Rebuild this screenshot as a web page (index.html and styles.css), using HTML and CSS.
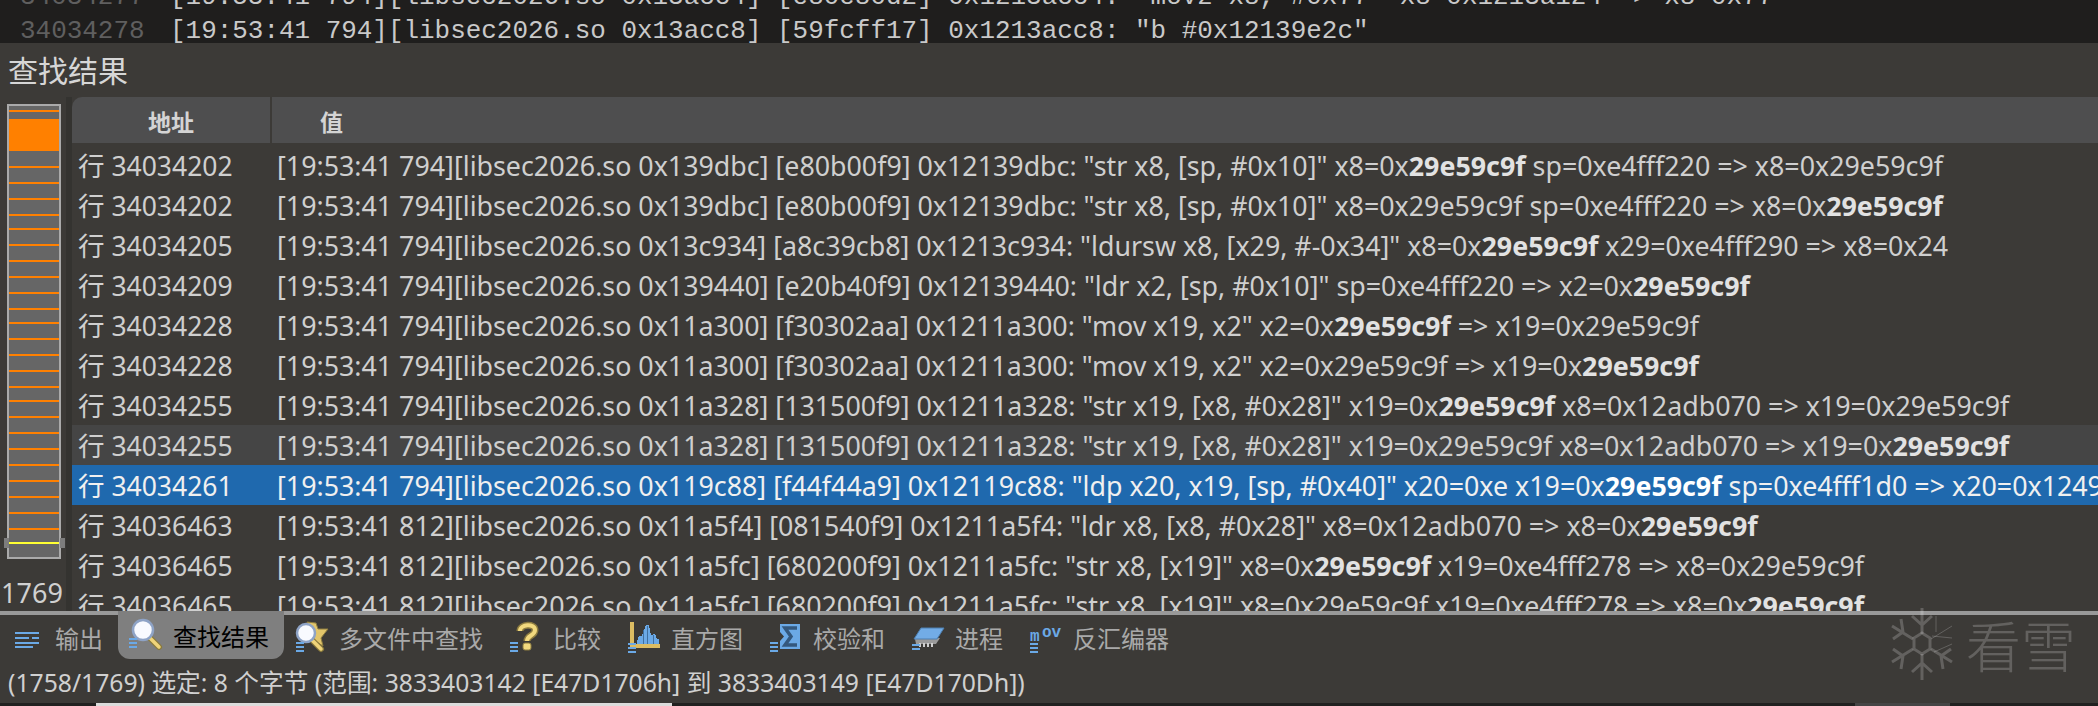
FILE: index.html
```html
<!DOCTYPE html>
<html lang="zh">
<head>
<meta charset="UTF-8">
<title>查找结果</title>
<link rel="stylesheet" href="styles.css">
</head>
<body>

<div class="log">
  <div class="log-line"><span class="log-num">34034277</span><span>[19:53:41 794][libsec2026.so 0x13acc4] [e80e80d2] 0x1213acc4: "movz x8, #0x77" x8=0x1213a124 => x8=0x77</span></div>
  <div class="log-line"><span class="log-num">34034278</span><span>[19:53:41 794][libsec2026.so 0x13acc8] [59fcff17] 0x1213acc8: "b #0x12139e2c"</span></div>
</div>

<div class="panel-title">查找结果</div>

<div class="results">
  <div class="side">
    <div class="map">
      <span class="grip grip-left"></span>
      <svg class="marks" width="50" height="451" shape-rendering="crispEdges">
        <g fill="#ff8000">
          <rect y="0" width="50" height="2"/>
          <rect y="9" width="50" height="32"/>
          <rect y="56" width="50" height="2"/>
          <rect y="72" width="50" height="2"/>
          <rect y="88" width="50" height="2"/>
          <rect y="104" width="50" height="2"/>
          <rect y="118" width="50" height="2"/>
          <rect y="134" width="50" height="2"/>
          <rect y="150" width="50" height="2"/>
          <rect y="166" width="50" height="2"/>
          <rect y="182" width="50" height="2"/>
          <rect y="198" width="50" height="2"/>
          <rect y="212" width="50" height="2"/>
          <rect y="228" width="50" height="2"/>
          <rect y="244" width="50" height="2"/>
          <rect y="260" width="50" height="2"/>
          <rect y="276" width="50" height="2"/>
          <rect y="290" width="50" height="2"/>
          <rect y="306" width="50" height="2"/>
          <rect y="322" width="50" height="2"/>
          <rect y="338" width="50" height="2"/>
          <rect y="354" width="50" height="2"/>
          <rect y="370" width="50" height="2"/>
          <rect y="386" width="50" height="2"/>
          <rect y="402" width="50" height="2"/>
          <rect y="418" width="50" height="2"/>
        </g>
        <rect y="432" width="50" height="2" fill="#ffff33"/>
      </svg>
      <span class="grip grip-right"></span>
    </div>
    <div class="map-count">1769</div>
  </div>

  <div class="table">
    <div class="table-head">
      <div class="head-addr">地址</div>
      <div class="head-val">值</div>
    </div>

    <div class="row"><div class="addr">行 34034202</div><div class="val">[19:53:41 794][libsec2026.so 0x139dbc] [e80b00f9] 0x12139dbc: "str x8, [sp, #0x10]" x8=0x<b>29e59c9f</b> sp=0xe4fff220 =&gt; x8=0x29e59c9f</div></div>
    <div class="row"><div class="addr">行 34034202</div><div class="val">[19:53:41 794][libsec2026.so 0x139dbc] [e80b00f9] 0x12139dbc: "str x8, [sp, #0x10]" x8=0x29e59c9f sp=0xe4fff220 =&gt; x8=0x<b>29e59c9f</b></div></div>
    <div class="row"><div class="addr">行 34034205</div><div class="val">[19:53:41 794][libsec2026.so 0x13c934] [a8c39cb8] 0x1213c934: "ldursw x8, [x29, #-0x34]" x8=0x<b>29e59c9f</b> x29=0xe4fff290 =&gt; x8=0x24</div></div>
    <div class="row"><div class="addr">行 34034209</div><div class="val">[19:53:41 794][libsec2026.so 0x139440] [e20b40f9] 0x12139440: "ldr x2, [sp, #0x10]" sp=0xe4fff220 =&gt; x2=0x<b>29e59c9f</b></div></div>
    <div class="row"><div class="addr">行 34034228</div><div class="val">[19:53:41 794][libsec2026.so 0x11a300] [f30302aa] 0x1211a300: "mov x19, x2" x2=0x<b>29e59c9f</b> =&gt; x19=0x29e59c9f</div></div>
    <div class="row"><div class="addr">行 34034228</div><div class="val">[19:53:41 794][libsec2026.so 0x11a300] [f30302aa] 0x1211a300: "mov x19, x2" x2=0x29e59c9f =&gt; x19=0x<b>29e59c9f</b></div></div>
    <div class="row"><div class="addr">行 34034255</div><div class="val">[19:53:41 794][libsec2026.so 0x11a328] [131500f9] 0x1211a328: "str x19, [x8, #0x28]" x19=0x<b>29e59c9f</b> x8=0x12adb070 =&gt; x19=0x29e59c9f</div></div>
    <div class="row row-hover"><div class="addr">行 34034255</div><div class="val">[19:53:41 794][libsec2026.so 0x11a328] [131500f9] 0x1211a328: "str x19, [x8, #0x28]" x19=0x29e59c9f x8=0x12adb070 =&gt; x19=0x<b>29e59c9f</b></div></div>
    <div class="row row-active"><div class="addr">行 34034261</div><div class="val">[19:53:41 794][libsec2026.so 0x119c88] [f44f44a9] 0x12119c88: "ldp x20, x19, [sp, #0x40]" x20=0xe x19=0x<b>29e59c9f</b> sp=0xe4fff1d0 =&gt; x20=0x124900b0</div></div>
    <div class="row"><div class="addr">行 34036463</div><div class="val">[19:53:41 812][libsec2026.so 0x11a5f4] [081540f9] 0x1211a5f4: "ldr x8, [x8, #0x28]" x8=0x12adb070 =&gt; x8=0x<b>29e59c9f</b></div></div>
    <div class="row"><div class="addr">行 34036465</div><div class="val">[19:53:41 812][libsec2026.so 0x11a5fc] [680200f9] 0x1211a5fc: "str x8, [x19]" x8=0x<b>29e59c9f</b> x19=0xe4fff278 =&gt; x8=0x29e59c9f</div></div>
    <div class="row"><div class="addr">行 34036465</div><div class="val">[19:53:41 812][libsec2026.so 0x11a5fc] [680200f9] 0x1211a5fc: "str x8, [x19]" x8=0x29e59c9f x19=0xe4fff278 =&gt; x8=0x<b>29e59c9f</b></div></div>
  </div>
</div>

<div class="divider"></div>

<div class="tabs">
  <div class="tab">
    <svg class="tab-icon" width="32" height="32" shape-rendering="crispEdges">
      <g fill="#6ba9e6">
        <rect x="3" y="10" width="24" height="2"/>
        <rect x="3" y="15" width="14" height="2"/>
        <rect x="20" y="15" width="7" height="2"/>
        <rect x="3" y="20" width="24" height="2"/>
        <rect x="3" y="24" width="18" height="2"/>
      </g>
    </svg>
    <span>输出</span>
  </div>
  <div class="tab tab-active">
    <svg class="tab-icon" width="32" height="32">
      <path d="M19 17 L29 27" stroke="#8a7a3c" stroke-width="6" stroke-linecap="round"/>
      <path d="M19 17 L29 27" stroke="#f0d47a" stroke-width="3.5" stroke-linecap="round"/>
      <circle cx="13" cy="10" r="10" fill="#f8faff" stroke="#8ea3c6" stroke-width="2.5"/>
      <g fill="#6ba9e6" shape-rendering="crispEdges">
        <rect x="-1" y="18" width="8" height="2"/>
        <rect x="-1" y="22" width="8" height="2"/>
        <rect x="-1" y="26" width="8" height="2"/>
      </g>
    </svg>
    <span>查找结果</span>
  </div>
  <div class="tab">
    <svg class="tab-icon" width="32" height="32">
      <path d="M11 0 L20 1 L22 7 L32 7 L25 16 L27 24 L14 16 Z" fill="#e2c56a" stroke="#8d7c40"/>
      <path d="M15 17 L25 27" stroke="#8a7a3c" stroke-width="6" stroke-linecap="round"/>
      <path d="M15 17 L25 27" stroke="#f0d47a" stroke-width="3.5" stroke-linecap="round"/>
      <circle cx="10" cy="11" r="9" fill="#f8faff" stroke="#8ea3c6" stroke-width="2.5"/>
      <g fill="#6ba9e6" shape-rendering="crispEdges">
        <rect y="20" width="8" height="2"/>
        <rect y="24" width="8" height="2"/>
        <rect y="28" width="8" height="2"/>
      </g>
    </svg>
    <span>多文件中查找</span>
  </div>
  <div class="tab">
    <svg class="tab-icon" width="32" height="32">
      <path d="M10 9 C10 2 25 1 25 8 C25 14 17 13 17 19" fill="none" stroke="#8d7c40" stroke-width="7"/>
      <path d="M10 9 C10 2 25 1 25 8 C25 14 17 13 17 19" fill="none" stroke="#f2d97e" stroke-width="4"/>
      <rect x="13" y="21" width="8" height="7" rx="2" fill="#f2d97e" stroke="#8d7c40"/>
      <g fill="#6ba9e6" shape-rendering="crispEdges">
        <rect y="20" width="8" height="2"/>
        <rect y="24" width="8" height="2"/>
        <rect y="28" width="8" height="2"/>
      </g>
    </svg>
    <span>比较</span>
  </div>
  <div class="tab">
    <svg class="tab-icon" width="32" height="32" shape-rendering="crispEdges">
      <path d="M9 20 L11 14 L14 14 L16 8 L18 3 L21 3 L22 9 L23 13 L27 12 L29 17 L31 17 L31 23 L9 23 Z" fill="#6ba9e6"/>
      <path d="M15 22 V8 M19 22 V4 M25 22 V13" stroke="#3f6f9f"/>
      <rect x="2" y="0" width="4" height="26" fill="#dcbc62"/>
      <rect x="2" y="22" width="30" height="4" fill="#dcbc62"/>
      <g fill="#6ba9e6">
        <rect y="21" width="8" height="2"/>
        <rect y="25" width="8" height="2"/>
        <rect y="29" width="8" height="2"/>
      </g>
    </svg>
    <span>直方图</span>
  </div>
  <div class="tab">
    <svg class="tab-icon" width="32" height="32">
      <path d="M10 2 H30 V27 H10 V19 L14 14.5 L10 10 Z" fill="#6ba9e6"/>
      <path d="M27 6 H15 L21 14.5 L15 23 H27" fill="none" stroke="#34587e" stroke-width="3.5"/>
      <g fill="#6ba9e6" shape-rendering="crispEdges">
        <rect y="20" width="8" height="2"/>
        <rect y="24" width="8" height="2"/>
        <rect y="28" width="8" height="2"/>
      </g>
    </svg>
    <span>校验和</span>
  </div>
  <div class="tab">
    <svg class="tab-icon" width="32" height="32">
      <path d="M3 17 L4 22 H24 L28 16 Z" fill="#9a9a9a"/>
      <path d="M8 21 V25 M12 21 V25 M16 21 V25 M20 21 V25" stroke="#cfcfcf" stroke-width="2"/>
      <path d="M9 6 H32 L25 17 H2 Z" fill="#72ace6" stroke="#4c7eb0"/>
      <g fill="#6ba9e6" shape-rendering="crispEdges">
        <rect y="22" width="8" height="2"/>
        <rect y="26" width="8" height="2"/>
      </g>
    </svg>
    <span>进程</span>
  </div>
  <div class="tab">
    <svg class="tab-icon" width="32" height="32">
      <text x="0" y="19" class="mov-m">m</text>
      <text x="12" y="15" class="mov-m">ov</text>
      <g fill="#6ba9e6" shape-rendering="crispEdges">
        <rect y="21" width="8" height="2"/>
        <rect y="25" width="8" height="2"/>
        <rect y="29" width="8" height="2"/>
      </g>
    </svg>
    <span>反汇编器</span>
  </div>
</div>

<div class="status">(1758/1769) 选定: 8 个字节 (范围: 3833403142 [E47D1706h] 到 3833403149 [E47D170Dh])</div>

<div class="taskbar">
  <div class="task-open"></div>
  <div class="task-other"></div>
</div>

<div class="watermark">
  <svg width="64" height="72" viewBox="0 0 64 72" fill="none" stroke="currentColor" stroke-width="3">
    <path d="M32 0 V26 M32 46 V72 M22 8 L32 17 L42 8 M22 64 L32 55 L42 64"/>
    <path d="M2 18 L23 31 M41 41 L62 54 M3 31 L13 24 L11 11 M61 41 L51 48 L53 61"/>
    <path d="M2 54 L23 41 M3 41 L13 48 L11 61"/>
    <path d="M41 31 L62 18 M42 28 L62 30 M46 8 V24 M44 44 L62 36" stroke-width="1"/>
    <path d="M32 25 L40 30 V41 L32 46 L24 41 V30 Z"/>
  </svg>
  <span class="watermark-text">看雪</span>
</div>

</body>
</html>
```

FILE: styles.css
```css
body {
  margin: 0;
  height: 706px;
  overflow: hidden;
  background: #3c3a37;
  font-family: "Noto Sans", "Noto Sans CJK SC", sans-serif;
  display: flex;
  flex-direction: column;
  position: relative;
}

/* log view on top */
.log {
  height: 43px;
  flex: none;
  overflow: hidden;
  background: #1f1e1d;
  display: flex;
  flex-direction: column;
  justify-content: flex-end;
  font-family: "Liberation Mono", monospace;
  font-size: 25.95px;
  line-height: 34px;
  color: #c9c9c9;
}
.log-line {
  display: flex;
  flex: none;
  white-space: pre;
  padding-left: 20px;
}
.log-line:last-child { margin-bottom: -5px; }
.log-num {
  width: 150px;
  color: #5f5f5f;
}

.panel-title {
  height: 54px;
  flex: none;
  padding-left: 8px;
  font-size: 30px;
  line-height: 56px;
  color: #d6d6d6;
}

.results {
  height: 514px;
  flex: none;
  display: flex;
}

/* overview strip */
.side {
  width: 66px;
  flex: none;
  border-right: 6px solid #343330;
}
.map {
  margin: 7px 0 0 7px;
  width: 50px;
  height: 451px;
  border: 2px solid #aaa;
  background: #666;
  position: relative;
}
.marks { display: block; margin-top: 4px; }
.grip {
  position: absolute;
  top: 432px;
  width: 5px;
  height: 10px;
  background: #7d7d7d;
}
.grip-left { left: -5px; }
.grip-right { right: -6px; }
.map-count {
  width: 64px;
  text-align: center;
  margin-top: 16px;
  font-size: 27px;
  line-height: 36px;
  color: #d0d0d0;
}

.table {
  flex: 1;
  min-width: 0;
  overflow: hidden;
}
.table-head {
  height: 46px;
  margin-bottom: 2px;
  background: #4e4e4f;
  border-top-left-radius: 10px;
  display: flex;
  font-size: 23px;
  font-weight: 700;
  line-height: 50px;
  color: #d4d4d4;
}
.head-addr {
  width: 198px;
  text-align: center;
  border-right: 2px solid #3c3a37;
}
.head-val { padding-left: 48px; }

.row {
  height: 40px;
  display: flex;
  font-size: 26.8px;
  line-height: 42px;
  color: #cfcfcf;
  white-space: nowrap;
}
.row b { font-weight: 700; color: #e2e2e2; }
.addr {
  width: 199px;
  padding-left: 6px;
  flex: none;
  font-size: 26.5px;
}
.row-hover { background: #454545; }
.row-active { background: #1f69ae; color: #f0f0f0; }
.row-active b { color: #fff; }

.divider {
  height: 4px;
  flex: none;
  background: #999;
}

/* bottom tabs */
.tabs {
  height: 45px;
  flex: none;
  display: flex;
  align-items: flex-start;
}
.tab {
  height: 45px;
  display: flex;
  align-items: center;
  gap: 11px;
  padding: 0 15px 0 12px;
  font-size: 24px;
  color: #a9a9a9;
}
.tab-icon { flex: none; overflow: visible; }
.tab-active {
  height: 48px;
  margin-top: -4px;
  padding-top: 1px;
  box-sizing: border-box;
  background: #7f7f7f;
  border-radius: 0 0 12px 12px;
  color: #000;
}
.mov-m {
  font-family: "Liberation Mono", monospace;
  font-size: 16px;
  font-weight: 700;
  fill: #6ba9e6;
}

.status {
  height: 43px;
  flex: none;
  padding-left: 8px;
  font-size: 24.7px;
  line-height: 46px;
  color: #d0d0d0;
  white-space: nowrap;
}

.taskbar {
  height: 3px;
  flex: none;
  display: flex;
  background: #212120;
}
.task-open {
  width: 576px;
  margin-left: 96px;
  background: #dcdcdc;
}
.task-other {
  width: 95px;
  margin-left: 1183px;
  background: #454545;
}

/* logo lies over the panel corner */
.watermark {
  position: absolute;
  left: 1890px;
  top: 608px;
  display: flex;
  align-items: flex-start;
  gap: 12px;
  color: rgba(255, 255, 255, 0.2);
}
.watermark-text {
  font-family: "Noto Sans CJK SC", sans-serif;
  font-weight: 300;
  font-size: 55px;
  line-height: 70px;
}
```
